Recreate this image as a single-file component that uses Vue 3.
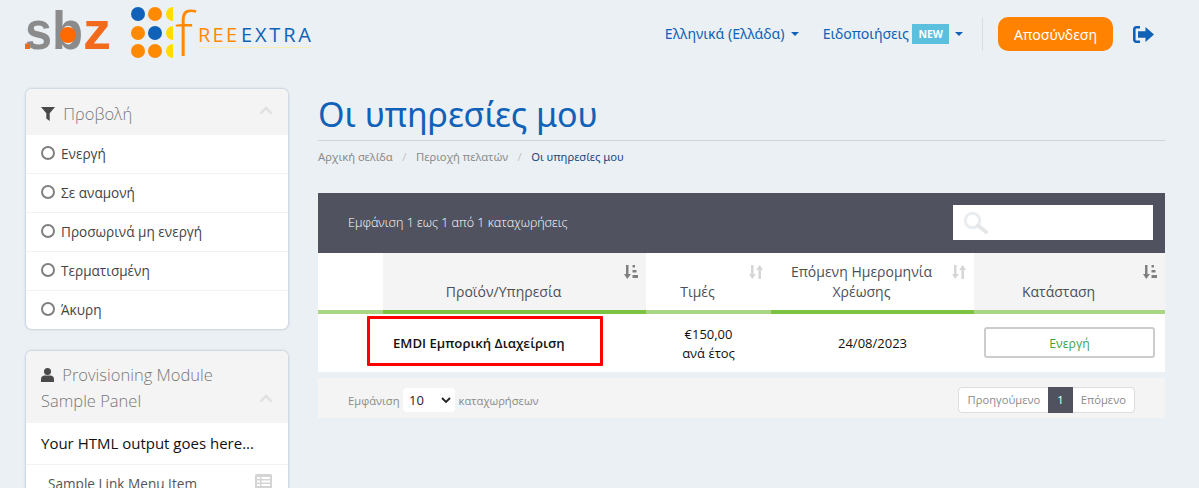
<script setup>
const filters = ['Ενεργή', 'Σε αναμονή', 'Προσωρινά μη ενεργή', 'Τερματισμένη', 'Άκυρη']
</script>

<template>
  <div class="page">
    <header class="top">
      <div class="logos">
        <svg class="logo-sbz" width="90" height="60" viewBox="0 0 90 60">
          <text x="0" y="49" class="sb" textLength="27" lengthAdjust="spacingAndGlyphs">s</text>
          <text x="27" y="49" class="sb" textLength="31" lengthAdjust="spacingAndGlyphs">b</text>
          <circle cx="43" cy="35" r="8" fill="#ff6a00" />
          <text x="58" y="49" class="z" textLength="28" lengthAdjust="spacingAndGlyphs">z</text>
          <rect x="0" y="43.500" width="5" height="5.500" fill="#f26b1d" />
        </svg>
        <svg class="logo-fe" width="190" height="60" viewBox="0 0 190 60">
          <g fill="#0f62b8"><circle cx="8" cy="14" r="7" /><circle cx="25" cy="33" r="7" /></g>
          <g fill="#ff8a00"><circle cx="25" cy="14" r="7" /><circle cx="8" cy="33" r="7" /><circle cx="8" cy="51" r="7" /><circle cx="25" cy="51" r="7" /></g>
          <g fill="#ffdd00"><path d="M43 7a7 7 0 0 0 0 14z" /><path d="M43 26a7 7 0 0 0 0 14z" /><path d="M43 44a7 7 0 0 0 0 14z" /></g>
          <text x="45" y="56" class="f">f</text>
          <text x="68" y="41.500" class="free" textLength="39" lengthAdjust="spacing">REE</text>
          <text x="111" y="41.500" class="extra" textLength="70" lengthAdjust="spacing">EXTRA</text>
          <rect x="69" y="47" width="111" height="1" fill="#f8eeb4" />
        </svg>
      </div>
      <nav class="nav">
        <a class="link">Ελληνικά (Ελλάδα)<i class="caret"></i></a>
        <a class="link notif">Ειδοποιήσεις<span class="new">NEW</span><i class="caret"></i></a>
        <span class="divider"></span>
        <button class="logout">Αποσύνδεση</button>
        <svg class="exit" width="21" height="17" viewBox="0 0 21 17">
          <path fill="#0f62b8" d="M7 0v2.600H3.600c-.6 0-1 .4-1 1v9.800c0 .6.4 1 1 1H7V17H3.200C1.400 17 0 15.600 0 13.800V3.200C0 1.400 1.400 0 3.200 0zM12.500 1l8.500 7.500-8.500 7.500v-4.300H5V5.300h7.500z" />
        </svg>
      </nav>
    </header>

    <div class="body">
      <aside class="side">
        <section class="panel">
          <div class="panel-head">
            <div class="panel-title">
              <svg class="funnel" width="14" height="14" viewBox="0 0 14 14"><path fill="#4a4a4a" d="M0 0h14L8.700 6.300V14l-3.400-2.500V6.300z" /></svg>
              Προβολή
            </div>
            <svg class="chev" width="14" height="9" viewBox="0 0 14 9"><path d="M1.500 7.500 7 2l5.500 5.500" fill="none" stroke="#e2e2e2" stroke-width="2.600" /></svg>
          </div>
          <div v-for="f in filters" :key="f" class="filter">
            <span class="radio"></span>{{ f }}
          </div>
        </section>

        <section class="panel second">
          <div class="panel-head tall">
            <div class="panel-title">
              <svg class="person" width="13" height="14" viewBox="0 0 13 14"><circle cx="6.500" cy="3.600" r="3.500" fill="#4a4a4a" /><path fill="#4a4a4a" d="M0 14v-2.800C0 8.800 1.800 7.500 3.500 7.500h6c1.700 0 3.500 1.300 3.500 3.700V14z" /></svg>
              Provisioning Module Sample Panel
            </div>
            <svg class="chev low" width="14" height="9" viewBox="0 0 14 9"><path d="M1.500 7.500 7 2l5.500 5.500" fill="none" stroke="#e2e2e2" stroke-width="2.600" /></svg>
          </div>
          <div class="html-out">Your HTML output goes here...</div>
          <div class="menu-item">
            <span>Sample Link Menu Item</span>
            <svg width="17" height="15" viewBox="0 0 17 15"><rect width="17" height="15" rx="1.500" fill="#d4d4d4" /><g fill="#fff"><rect x="2" y="3" width="3" height="2" /><rect x="6.500" y="3" width="8.500" height="2" /><rect x="2" y="6.500" width="3" height="2" /><rect x="6.500" y="6.500" width="8.500" height="2" /><rect x="2" y="10" width="3" height="2" /><rect x="6.500" y="10" width="8.500" height="2" /></g></svg>
          </div>
        </section>
      </aside>

      <main class="main">
        <h1 class="title">Οι υπηρεσίες μου</h1>
        <ol class="crumbs">
          <li>Αρχική σελίδα</li>
          <li class="sep">/</li>
          <li>Περιοχή πελατών</li>
          <li class="sep">/</li>
          <li class="active">Οι υπηρεσίες μου</li>
        </ol>

        <div class="tbar">
          <span class="tinfo">Εμφάνιση 1 εως 1 από 1 καταχωρήσεις</span>
          <div class="search">
            <svg width="26" height="24" viewBox="0 0 26 24"><circle cx="9.500" cy="9.500" r="7.200" fill="none" stroke="#e9edf0" stroke-width="3" /><path d="m15 14.500 8 6.500" stroke="#e4e6e8" stroke-width="4" stroke-linecap="round" /></svg>
          </div>
        </div>

        <div class="grid thead">
          <div class="th blank"></div>
          <div class="th sorted">
            <svg class="sort" viewBox="0 0 14 14" width="14" height="14"><path fill="#808080" d="M2 0h2.500v9H7L3.250 14 0 9h2zM8.500 0H11v2.500H8.500zM8.500 5h4v2.500h-4zM8.500 10H14v3H8.500z" /></svg>
            <span>Προϊόν/Υπηρεσία</span>
          </div>
          <div class="th">
            <svg class="sort" viewBox="0 0 14 14" width="14" height="14"><path fill="#d6d6d6" d="M2 0h2.500v9H7L3.250 14 0 9h2zM9.500 14H12V5h2L10.750 0 7 5h2.500z" /></svg>
            <span>Τιμές</span>
          </div>
          <div class="th strong">
            <svg class="sort" viewBox="0 0 14 14" width="14" height="14"><path fill="#d6d6d6" d="M2 0h2.500v9H7L3.250 14 0 9h2zM9.500 14H12V5h2L10.750 0 7 5h2.500z" /></svg>
            <span>Επόμενη Ημερομηνία<br>Χρέωσης</span>
          </div>
          <div class="th sorted light">
            <svg class="sort" viewBox="0 0 14 14" width="14" height="14"><path fill="#808080" d="M2 0h2.500v9H7L3.250 14 0 9h2zM8.500 0H11v2.500H8.500zM8.500 5h4v2.500h-4zM8.500 10H14v3H8.500z" /></svg>
            <span>Κατάσταση</span>
          </div>
        </div>

        <div class="grid tbody">
          <div class="td"></div>
          <div class="td product">
            <strong>EMDI Εμπορική Διαχείριση</strong>
            <span class="redbox"></span>
          </div>
          <div class="td price">€150,00<br>ανά έτος</div>
          <div class="td">24/08/2023</div>
          <div class="td"><span class="status">Ενεργή</span></div>
        </div>

        <div class="tfoot">
          <div class="len">
            Εμφάνιση
            <span class="select">10
              <svg width="10" height="7" viewBox="0 0 10 7"><path d="M1 1l4 4 4-4" fill="none" stroke="#222" stroke-width="1.800" /></svg>
            </span>
            καταχωρήσεων
          </div>
          <div class="pager">
            <span class="pg">Προηγούμενο</span>
            <span class="pg cur">1</span>
            <span class="pg">Επόμενο</span>
          </div>
        </div>
      </main>
    </div>
  </div>
</template>

<style>
html, body { margin: 0; height: 100%; overflow: hidden; background: #ebf0f4; }
</style>

<style scoped>
.page { width: 1199px; height: 488px; overflow: hidden; background: #ebf0f4; font-family: "Open Sans", "Noto Sans", sans-serif; color: #333; }
.top { height: 68px; display: flex; align-items: center; justify-content: space-between; padding: 0 45px 0 25px; box-sizing: border-box; }
.logos { display: flex; align-items: flex-start; gap: 15px; align-self: flex-start; }
.sb { font: 700 54px "Liberation Sans", sans-serif; fill: #8b8b8b; }
.z { font: 700 54px "Liberation Sans", sans-serif; fill: #f26b1d; }
.f { font: 300 60px "Open Sans", sans-serif; fill: #ff8a00; }
.free { font: 400 20px "Open Sans", sans-serif; fill: #ff8a00; }
.extra { font: 400 20px "Open Sans", sans-serif; fill: #0f62b8; }
.nav { display: flex; align-items: center; height: 34px; font-family: "Noto Sans", sans-serif; font-size: 14.150px; color: #0f62b8; }
.link { display: flex; align-items: center; white-space: nowrap; padding-bottom: 1px; }
.notif { margin-left: 24px; }
.caret { width: 0; height: 0; border: 4px solid transparent; border-top-color: #0f62b8; border-bottom: 0; margin-left: 6px; }
.new { background: #5bc0de; color: #fff; font-size: 10.500px; font-weight: 700; padding: 0 6px; height: 20px; line-height: 20px; margin-left: 3.500px; }
.divider { width: 1px; height: 34px; background: #d9dee2; margin: 0 15px 0 19px; }
.logout { width: 115px; height: 34px; padding: 0; border: 0; border-radius: 10px; background: #ff8200; color: #fff; font: 14.200px "Noto Sans", sans-serif; }
.exit { margin-left: 20px; }
.body { display: flex; align-items: flex-start; padding: 20px 34px 0 26px; gap: 30px; }
.side { width: 262px; flex: none; display: flex; flex-direction: column; gap: 22px; margin-top: 1px; }
.panel { background: #fff; border-radius: 6px; overflow: hidden; box-shadow: 0 0 2px 1px rgba(170, 185, 205, .55); }
.panel-head { height: 46px; background: #f4f4f4; display: flex; justify-content: space-between; align-items: center; padding: 2px 15px 0; box-sizing: border-box; color: #777; font-weight: 300; font-size: 16.500px; }
.panel-head.tall { height: 72px; align-items: flex-start; padding-top: 11px; line-height: 26px; }
.panel-title { display: block; }
.funnel { vertical-align: -1px; margin-right: 4px; }
.person { vertical-align: -1px; margin-right: 4px; }
.chev { margin-top: -5px; }
.chev.low { margin-top: 32px; flex: none; }
.filter { height: 39px; box-sizing: border-box; display: flex; align-items: center; padding: 0 15px 2px; font-size: 13.600px; color: #444; border-bottom: 1px solid #f1f3f5; }
.filter:last-child { border-bottom: 0; height: 38px; }
.radio { width: 14px; height: 14px; box-sizing: border-box; border: 2px solid #808080; border-radius: 50%; margin-right: 6px; flex: none; }
.html-out { height: 42px; display: flex; align-items: center; padding: 0 15px 2px; box-sizing: border-box; font-size: 15px; color: #111; border-bottom: 1px solid #f1f3f5; }
.menu-item { height: 40px; display: flex; justify-content: space-between; padding: 9px 16px 0 22px; box-sizing: border-box; font-size: 13.600px; color: #555; }
.main { width: 847px; flex: none; }
.title { margin: 0; height: 53px; box-sizing: border-box; line-height: 52px; font-family: "Noto Sans", sans-serif; font-weight: 400; font-size: 34px; color: #0f62b8; border-bottom: 1px solid #d2d5d8; white-space: nowrap; }
.crumbs { list-style: none; margin: 0; padding: 0; height: 52px; display: flex; align-items: flex-start; font-family: "Noto Sans", sans-serif; font-size: 11.250px; line-height: 32px; color: #8b8b8b; }
.sep { padding: 0 9.500px; color: #c4c4c4; }
.active { color: #174a7c; }
.tbar { height: 60px; background: #50535f; color: #fff; display: flex; align-items: center; justify-content: space-between; padding: 0 12px 0 30px; font-size: 12.550px; font-weight: 300; }
.tinfo { padding-bottom: 2px; }
.search { width: 200px; height: 35px; background: #fff; display: flex; align-items: center; padding-left: 10px; box-sizing: border-box; margin-bottom: 1px; }
.grid { display: grid; grid-template-columns: 65px 263px 125px 203px 191px; background: #fff; }
.thead { height: 61px; }
.th { position: relative; display: flex; align-items: flex-end; justify-content: center; text-align: center; padding: 0 22px 8px 0; font-size: 14px; line-height: 20px; color: #4a4f5a; border-bottom: 4px solid #a9d585; box-sizing: border-box; }
.th.sorted { background: #f4f4f4; border-bottom-color: #7dc243; }
.th.sorted.light { border-bottom-color: #a9d585; }
.th.strong { border-bottom-color: #7dc243; }
.sort { position: absolute; right: 8px; top: 12px; }
.tbody { height: 58px; }
.td { position: relative; display: flex; align-items: center; justify-content: center; text-align: center; padding-top: 1px; font-size: 13px; line-height: 19.500px; color: #111; }
.td.price { padding-top: 2px; }
.product { justify-content: flex-start; padding-left: 10px; }
.product strong { font-weight: 600; font-size: 13.150px; color: #111; }
.redbox { position: absolute; left: -16px; top: 2px; width: 236px; height: 50px; border: 3px solid #f00; box-sizing: border-box; border-radius: 1px; }
.status { width: 171px; height: 31px; margin-top: -2px; line-height: 29px; box-sizing: border-box; border: 2px solid #ccc; border-radius: 3px; color: #3aa648; font-size: 12.300px; background: #fff; }
.tfoot { margin-top: 6px; height: 40px; background: #f4f4f4; display: flex; align-items: center; justify-content: space-between; padding: 0 30px; font-size: 11.200px; color: #8b8b8b; }
.len { display: flex; align-items: center; gap: 3.500px; padding-top: 4px; }
.select { width: 52px; height: 24px; background: #fff; border-radius: 4px; box-sizing: border-box; padding: 0 4px 0 6px; display: flex; align-items: center; justify-content: space-between; color: #222; font-size: 13px; }
.pager { display: flex; height: 26px; align-items: stretch; margin-top: 3px; background: #fff; border: 1px solid #ddd; border-radius: 4px; box-sizing: border-box; }
.pg { padding: 0 8px; display: flex; align-items: center; }
.pg:first-child { padding: 0 8px 0 9px; }
.cur { background: #50535f; color: #fff; margin-top: -1px; margin-bottom: -1px; padding: 0 9px; }
</style>
